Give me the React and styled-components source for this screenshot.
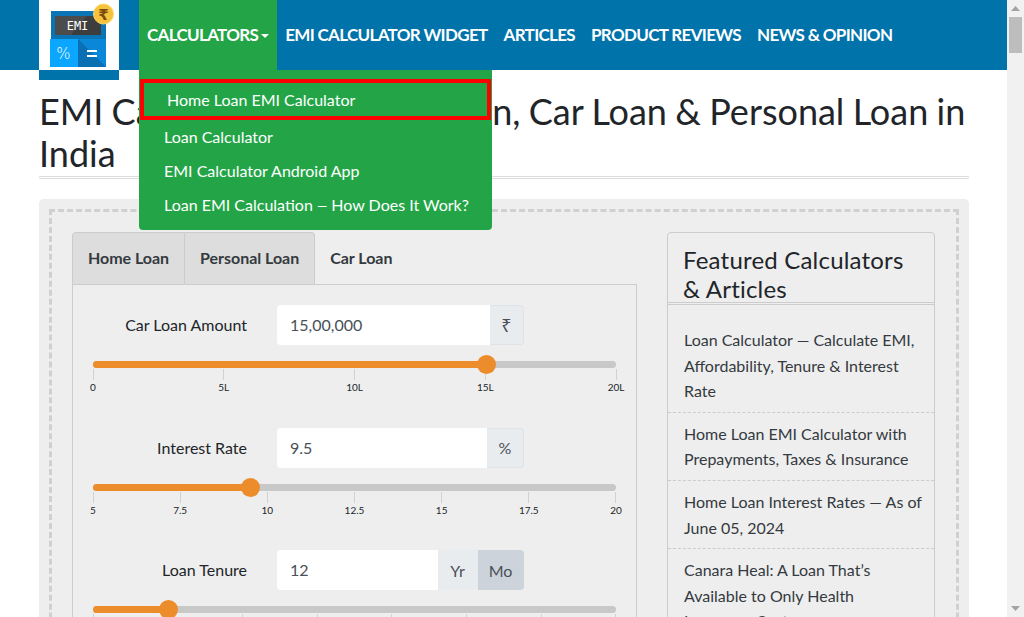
import React from 'react';
import styled, { createGlobalStyle } from 'styled-components';

const GlobalStyle = createGlobalStyle`
  html, body {
    margin: 0;
    padding: 0;
    height: 617px;
    overflow: hidden;
    background: #fff;
  }
  * {
    box-sizing: border-box;
  }
  body {
    font-family: Lato, "Noto Sans", sans-serif;
    color: #212529;
  }
`;

const Screen = styled.div`
  display: flex;
  width: 1024px;
  height: 617px;
  overflow: hidden;
`;

const Page = styled.div`
  position: relative;
  width: 1007px;
  height: 617px;
  overflow: hidden;
`;

const Header = styled.header`
  display: flex;
  align-items: flex-start;
  height: 70px;
  padding-left: 39px;
  background: #0073aa;
`;

const LogoBox = styled.a`
  display: block;
  flex: none;
  width: 80px;
  height: 80px;
  margin-right: 20px;
  background: #fff;
  border-bottom: 10px solid #0073aa;
  position: relative;
  z-index: 2;
`;

const Nav = styled.nav`
  display: flex;
  height: 70px;
`;

const NavItem = styled.a`
  display: flex;
  align-items: center;
  height: 70px;
  padding: 0 8px 1px;
  color: #fff;
  font-size: 17px;
  font-weight: 700;
  letter-spacing: -0.67px;
  white-space: nowrap;
  background: ${props => (props.$open ? '#23a547' : 'transparent')};
`;

const Caret = styled.span`
  width: 0;
  height: 0;
  margin-left: 3px;
  margin-top: 2px;
  border-top: 4px solid #fff;
  border-left: 4px solid transparent;
  border-right: 4px solid transparent;
`;

const Dropdown = styled.div`
  position: absolute;
  top: 70px;
  left: 139px;
  z-index: 5;
  width: 353px;
  height: 160px;
  padding-top: 9px;
  background: #23a547;
  border-radius: 0 0 4px 4px;
`;

const DropItem = styled.a`
  display: flex;
  align-items: center;
  color: #fff;
  font-size: 16px;
  white-space: nowrap;
  height: ${props => (props.$marked ? '41px' : '34px')};
  padding-left: ${props => (props.$marked ? '23px' : '25px')};
  margin: ${props => (props.$marked ? '0 1px -1px' : '0')};
  border: ${props => (props.$marked ? '4px solid #fe0000' : 'none')};
`;

const Dash = styled.span`
  font-size: 13px;
`;

const Content = styled.main`
  padding: 0 38px 0 39px;
`;

const Title = styled.h1`
  margin: 20px 0 0;
  padding-bottom: 4px;
  height: 89px;
  font-size: 36px;
  line-height: 42px;
  font-weight: 400;
  word-spacing: -0.9px;
  border-bottom: 3px double #ddd;
`;

const Panel = styled.section`
  margin-top: 20px;
  padding: 10px;
  background: #eee;
  border-radius: 5px 5px 0 0;
  height: 600px;
`;

const DashedBox = styled.div`
  display: flex;
  gap: 30px;
  padding: 20px 21px 20px 20px;
  height: 100%;
  border: 3px dashed #d0d0d0;
`;

const Calculator = styled.div`
  flex: none;
  width: 565px;
`;

const Tabs = styled.div`
  display: flex;
  height: 53px;
`;

const Tab = styled.div`
  display: flex;
  align-items: center;
  padding: 0 15px ${props => (props.$active ? '4px' : '3px')};
  font-size: 16px;
  font-weight: 700;
  letter-spacing: -0.03px;
  color: #343a40;
  background: ${props => (props.$active ? '#eee' : '#ddd')};
  border: 1px solid #ccc;
  border-left-width: ${props => (props.$first ? '1px' : '0')};
  border-top-color: ${props => (props.$active ? 'transparent' : '#ccc')};
  border-right: ${props => (props.$active ? 'none' : '1px solid #ccc')};
  border-bottom: ${props => (props.$active ? 'none' : '1px solid #ccc')};
  border-radius: ${props => (props.$first ? '4px 0 0 0' : props.$last ? '0 4px 0 0' : '0')};
`;

const TabBody = styled.div`
  padding: 20px 20px 0;
  height: 500px;
  border: 1px solid #ccc;
  border-top: none;
  position: relative;
`;

const TabTopLine = styled.div`
  position: absolute;
  top: -1px;
  right: -1px;
  left: 242px;
  height: 1px;
  background: #ccc;
`;

const Field = styled.div`
  margin-bottom: 35px;
  height: 87.5px;
`;

const FieldRow = styled.div`
  display: flex;
  align-items: center;
  gap: 30px;
  height: 40px;
`;

const FieldLabel = styled.label`
  flex: none;
  width: 154px;
  padding-bottom: 1px;
  text-align: right;
  font-size: 16px;
`;

const InputGroup = styled.div`
  display: flex;
  width: 247px;
  height: 40px;
`;

const Value = styled.div`
  flex: 1;
  display: flex;
  align-items: center;
  padding: 0 0 1px 13px;
  font-size: 16px;
  color: #495057;
  background: #fff;
  border-radius: 4px 0 0 4px;
`;

const Addon = styled.div`
  flex: none;
  display: flex;
  align-items: center;
  justify-content: center;
  width: ${props => props.$width}px;
  font-family: ${props => (props.$rupee ? '"Noto Sans"' : 'Lato')}, sans-serif;
  font-size: ${props => (props.$rupee ? '18px' : '16px')};
  color: #495057;
  background: ${props => (props.$selected ? '#ccd3da' : '#e9ecef')};
  border: 1px solid ${props => (props.$selected ? '#ccd3da' : '#dfe3e7')};
  border-left: none;
  border-radius: ${props => (props.$last ? '0 4px 4px 0' : '0')};
  ${props => (props.$plain ? 'border-color: #e9ecef;' : '')}
`;

const SliderWrap = styled.div`
  margin-top: 16px;
`;

const Track = styled.div`
  position: relative;
  height: 7px;
  background: #c8c8c8;
  border-radius: 4px;
`;

const Fill = styled.div`
  height: 7px;
  background: #ed8c2b;
  border-radius: 4px 0 0 4px;
`;

const Handle = styled.div`
  position: absolute;
  top: -6px;
  width: 19px;
  height: 19px;
  margin-left: -9.5px;
  background: #ed8c2b;
  border-radius: 50%;
`;

const Scale = styled.div`
  display: flex;
  justify-content: space-between;
  margin-top: 1px;
`;

const Mark = styled.div`
  display: flex;
  flex-direction: column;
  align-items: center;
  width: 0;
`;

const Tick = styled.span`
  flex: none;
  width: 1px;
  height: 11px;
  background: #ccd3d3;
`;

const TickLabel = styled.span`
  margin-top: 1px;
  font-size: 10px;
  line-height: 12px;
  color: #212529;
  white-space: nowrap;
`;

const Sidebar = styled.aside`
  flex: none;
  width: 268px;
  height: 500px;
  overflow: hidden;
  border: 1px solid #ccc;
  border-radius: 4px;
`;

const SidebarTitle = styled.h3`
  margin: 0;
  height: 72px;
  padding: 12px 15px 0;
  font-size: 24px;
  line-height: 29px;
  font-weight: 400;
  letter-spacing: 0.2px;
  border-bottom: 3px double #ccc;
`;

const ArticleList = styled.ul`
  margin: 0;
  padding: 0;
  list-style: none;
`;

const Article = styled.li`
  padding: ${props => (props.$first ? '22px' : '8px')} 12px 8px 16px;
  font-size: 16px;
  line-height: 25.6px;
  color: #343a40;
  border-bottom: 1px dashed #ccc;
`;

const ScrollBar = styled.div`
  flex: none;
  display: flex;
  flex-direction: column;
  align-items: center;
  justify-content: space-between;
  width: 17px;
  height: 617px;
  background: #f1f1f1;
`;

const ScrollArrow = styled.div`
  display: flex;
  align-items: center;
  justify-content: center;
  width: 17px;
  height: 17px;
`;

const ScrollThumb = styled.div`
  width: 13px;
  height: 36px;
  background: #bdbdbd;
`;

const ScrollTop = styled.div`
  display: flex;
  flex-direction: column;
  align-items: center;
`;

const Logo = () => (
  <svg width="80" height="70" viewBox="0 0 80 70">
    <rect x="12" y="11" width="55" height="29" fill="#0a74b4" />
    <rect x="16" y="16" width="46" height="19" fill="#4c4c4c" />
    <polygon points="48,16 62,16 62,35 32,35" fill="#3d3d3d" />
    <text x="38.5" y="29.5" textAnchor="middle" fontFamily="'DejaVu Sans Mono', monospace" fontSize="12" fill="#fff">EMI</text>
    <rect x="11" y="39" width="28" height="28" fill="#0aa6ff" />
    <rect x="39" y="39" width="28" height="28" fill="#0b87d9" />
    <polygon points="39,39 67,67 39,67" fill="#0a6fb3" />
    <text x="24.5" y="58.5" textAnchor="middle" fontFamily="'DejaVu Sans', sans-serif" fontSize="15" fontWeight="300" fill="#fff">%</text>
    <rect x="48" y="50" width="10" height="2" fill="#fff" />
    <rect x="48" y="55" width="10" height="2" fill="#fff" />
    <circle cx="64.5" cy="14" r="10" fill="#f5c33b" stroke="#fdd96a" strokeWidth="1" />
    <text x="64.5" y="19.5" textAnchor="middle" fontFamily="'DejaVu Sans', sans-serif" fontSize="15" fontWeight="700" fill="#7a4a10">₹</text>
  </svg>
);

const navLinks = ['EMI CALCULATOR WIDGET', 'ARTICLES', 'PRODUCT REVIEWS', 'NEWS & OPINION'];

const articles = [
  'Loan Calculator — Calculate EMI, Affordability, Tenure & Interest Rate',
  'Home Loan EMI Calculator with Prepayments, Taxes & Insurance',
  'Home Loan Interest Rates — As of June 05, 2024',
  'Canara Heal: A Loan That’s Available to Only Health Insurance Customers',
];

const Slider = ({ percent, labels }) => (
  <SliderWrap>
    <Track>
      <Fill style={{ width: `${percent}%` }} />
      <Handle style={{ left: `${percent}%` }} />
    </Track>
    <Scale>
      {labels.map(label => (
        <Mark key={label}>
          <Tick />
          <TickLabel>{label}</TickLabel>
        </Mark>
      ))}
    </Scale>
  </SliderWrap>
);

const ArrowIcon = ({ up }) => (
  <svg width="9" height="5" viewBox="0 0 9 5">
    <polygon points={up ? '4.5,0 9,5 0,5' : '0,0 9,0 4.5,5'} fill="#a3a3a3" />
  </svg>
);

const App = () => (
  <Screen>
    <GlobalStyle />
    <Page>
      <Header>
        <LogoBox>
          <Logo />
        </LogoBox>
        <Nav>
          <NavItem $open>
            CALCULATORS
            <Caret />
          </NavItem>
          {navLinks.map(link => (
            <NavItem key={link}>{link}</NavItem>
          ))}
        </Nav>
      </Header>
      <Dropdown>
        <DropItem $marked>Home Loan EMI Calculator</DropItem>
        <DropItem>Loan Calculator</DropItem>
        <DropItem>EMI Calculator Android App</DropItem>
        <DropItem>
          <span>Loan EMI Calculation <Dash>—</Dash> How Does It Work?</span>
        </DropItem>
      </Dropdown>
      <Content>
        <Title>EMI Calculator for Home Loan, Car Loan &amp; Personal Loan in India</Title>
        <Panel>
          <DashedBox>
            <Calculator>
              <Tabs>
                <Tab $first>Home Loan</Tab>
                <Tab $last>Personal Loan</Tab>
                <Tab $active>Car Loan</Tab>
              </Tabs>
              <TabBody>
                <TabTopLine />
                <Field>
                  <FieldRow>
                    <FieldLabel>Car Loan Amount</FieldLabel>
                    <InputGroup>
                      <Value>15,00,000</Value>
                      <Addon $width={34} $last $rupee>₹</Addon>
                    </InputGroup>
                  </FieldRow>
                  <Slider percent={75.3} labels={['0', '5L', '10L', '15L', '20L']} />
                </Field>
                <Field>
                  <FieldRow>
                    <FieldLabel>Interest Rate</FieldLabel>
                    <InputGroup>
                      <Value>9.5</Value>
                      <Addon $width={37} $last>%</Addon>
                    </InputGroup>
                  </FieldRow>
                  <Slider percent={30.2} labels={['5', '7.5', '10', '12.5', '15', '17.5', '20']} />
                </Field>
                <Field>
                  <FieldRow>
                    <FieldLabel>Loan Tenure</FieldLabel>
                    <InputGroup>
                      <Value>12</Value>
                      <Addon $width={40} $plain>Yr</Addon>
                      <Addon $width={46} $selected $last>Mo</Addon>
                    </InputGroup>
                  </FieldRow>
                  <Slider percent={14.4} labels={['0', '12', '24', '36', '48', '60', '72', '84']} />
                </Field>
              </TabBody>
            </Calculator>
            <Sidebar>
              <SidebarTitle>Featured Calculators &amp; Articles</SidebarTitle>
              <ArticleList>
                {articles.map((article, i) => (
                  <Article key={article} $first={i === 0}>{article}</Article>
                ))}
              </ArticleList>
            </Sidebar>
          </DashedBox>
        </Panel>
      </Content>
    </Page>
    <ScrollBar>
      <ScrollTop>
        <ScrollArrow><ArrowIcon up /></ScrollArrow>
        <ScrollThumb />
      </ScrollTop>
      <ScrollArrow><ArrowIcon /></ScrollArrow>
    </ScrollBar>
  </Screen>
);

export default App;
